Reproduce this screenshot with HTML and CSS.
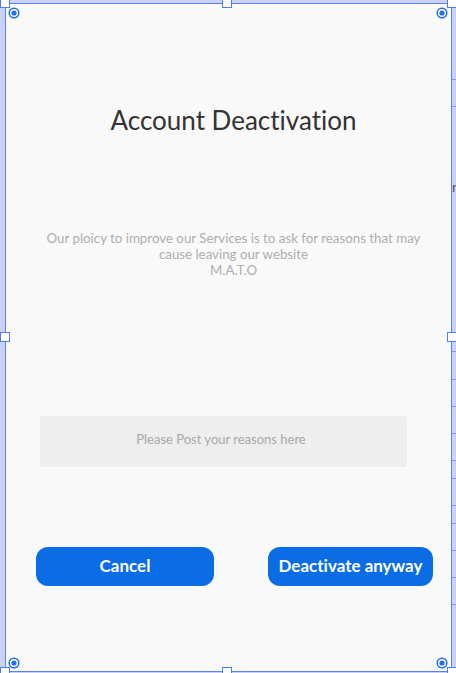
FILE: index.html
```html
<!DOCTYPE html>
<html lang="en">
<head>
<meta charset="utf-8">
<title>Account Deactivation</title>
<link rel="stylesheet" href="styles.css">
</head>
<body>
<div class="canvas">
  <div class="frame">
    <div class="intro">
      <h1 class="title">Account Deactivation</h1>
      <p class="policy">Our ploicy to improve our Services is to ask for reasons that may cause leaving our website<br>M.A.T.O</p>
    </div>
    <div class="reason">Please Post your reasons here</div>
    <div class="actions">
      <button class="btn btn-cancel">Cancel</button>
      <button class="btn btn-deactivate">Deactivate anyway</button>
    </div>

    <span class="handle h-tl"></span>
    <span class="handle h-tc"></span>
    <span class="handle h-tr"></span>
    <span class="handle h-ml"></span>
    <span class="handle h-mr"></span>
    <span class="handle h-bl"></span>
    <span class="handle h-bc"></span>
    <span class="handle h-br"></span>

    <svg class="pin p-tl" viewBox="0 0 12 12"><circle cx="6" cy="6" r="4.8" fill="#fff" stroke="#1f6ff0" stroke-width="1.5"/><circle cx="6" cy="6" r="2.6" fill="#1f6ff0"/></svg>
    <svg class="pin p-tr" viewBox="0 0 12 12"><circle cx="6" cy="6" r="4.8" fill="#fff" stroke="#1f6ff0" stroke-width="1.5"/><circle cx="6" cy="6" r="2.6" fill="#1f6ff0"/></svg>
    <svg class="pin p-bl" viewBox="0 0 12 12"><circle cx="6" cy="6" r="4.8" fill="#fff" stroke="#1f6ff0" stroke-width="1.5"/><circle cx="6" cy="6" r="2.6" fill="#1f6ff0"/></svg>
    <svg class="pin p-br" viewBox="0 0 12 12"><circle cx="6" cy="6" r="4.8" fill="#fff" stroke="#1f6ff0" stroke-width="1.5"/><circle cx="6" cy="6" r="2.6" fill="#1f6ff0"/></svg>
  </div>
  <div class="side">
    <div class="row r1"></div>
    <div class="row r2"></div>
    <div class="row r3"><span class="frag">n</span></div>
    <div class="row r4"></div>
    <div class="row r5"></div>
    <div class="row r5"></div>
    <div class="row r5"></div>
    <div class="row r6"></div>
    <div class="row r5"></div>
    <div class="row r6"></div>
    <div class="row r5"></div>
    <div class="row r5"></div>
    <div class="row r5"></div>
  </div>
</div>
</body>
</html>
```
FILE: styles.css
```css
html, body {
  margin: 0;
  padding: 0;
}
body {
  width: 456px;
  height: 673px;
  overflow: hidden;
  background: #cad2f4;
  font-family: Lato, "Open Sans", sans-serif;
  font-variant-ligatures: none;
}
.canvas {
  display: flex;
  padding: 3px 0 0 5px;
  height: 673px;
  box-sizing: border-box;
}
.frame {
  position: relative;
  width: 447px;
  height: 669px;
  box-sizing: border-box;
  border: 1px solid #5b82ee;
  background: #f9f9f9;
  flex: none;
}
.intro {
  padding: 99px 0 0 10px;
  text-align: center;
}
.title {
  margin: 0;
  font-size: 26px;
  line-height: 34px;
  font-weight: 400;
  color: #333333;
}
.policy {
  margin: 93px auto 0;
  width: 400px;
  font-size: 13.3px;
  line-height: 16px;
  color: #aeaeae;
}
.reason {
  margin: 138px 0 0 34px;
  width: 367px;
  height: 51px;
  box-sizing: border-box;
  padding: 15px 5px 0 0;
  background: #eeeeee;
  border-radius: 2px;
  text-align: center;
  font-size: 13px;
  line-height: 16px;
  color: #a9a9a9;
}
.actions {
  display: flex;
  justify-content: space-between;
  margin-top: 80px;
  padding: 0 18px 0 30px;
}
.btn {
  height: 39px;
  border: none;
  border-radius: 12px;
  background: #0a6de6;
  color: #ffffff;
  font-family: Lato, "Open Sans", sans-serif;
  font-variant-ligatures: none;
  font-weight: 700;
  font-size: 17px;
  line-height: 20px;
  padding: 0 0 2px;
}
.btn-cancel { width: 178px; }
.btn-deactivate { width: 165px; }

.handle {
  position: absolute;
  width: 8px;
  height: 8px;
  background: #ffffff;
  border: 1px solid #4f7cf2;
}
.h-tl { left: -6px; top: -6px; }
.h-tc { left: 216px; top: -6px; }
.h-tr { right: -6px; top: -6px; }
.h-ml { left: -6px; top: 328px; }
.h-mr { right: -6px; top: 328px; }
.h-bl { left: -6px; bottom: -6px; }
.h-bc { left: 216px; bottom: -6px; }
.h-br { right: -6px; bottom: -6px; }

.pin {
  position: absolute;
  width: 12px;
  height: 12px;
}
.p-tl { left: 2px; top: 3px; }
.p-tr { right: 3px; top: 3px; }
.p-bl { left: 2px; bottom: 2px; }
.p-br { right: 3px; bottom: 2px; }

.side {
  flex: 1;
  display: flex;
  flex-direction: column;
  overflow: hidden;
  margin-top: -3px;
}
.row {
  border-bottom: 1px solid #8d97c4;
  flex: none;
  overflow: hidden;
}
.r1 { height: 79px; }
.r2 { height: 26px; }
.r3 { height: 244px; }
.r4 { height: 27px; }
.r5 { height: 26px; }
.r6 { height: 17px; }
.frag {
  display: block;
  margin-top: 72px;
  font-size: 14px;
  line-height: 16px;
  color: #555;
}
```
